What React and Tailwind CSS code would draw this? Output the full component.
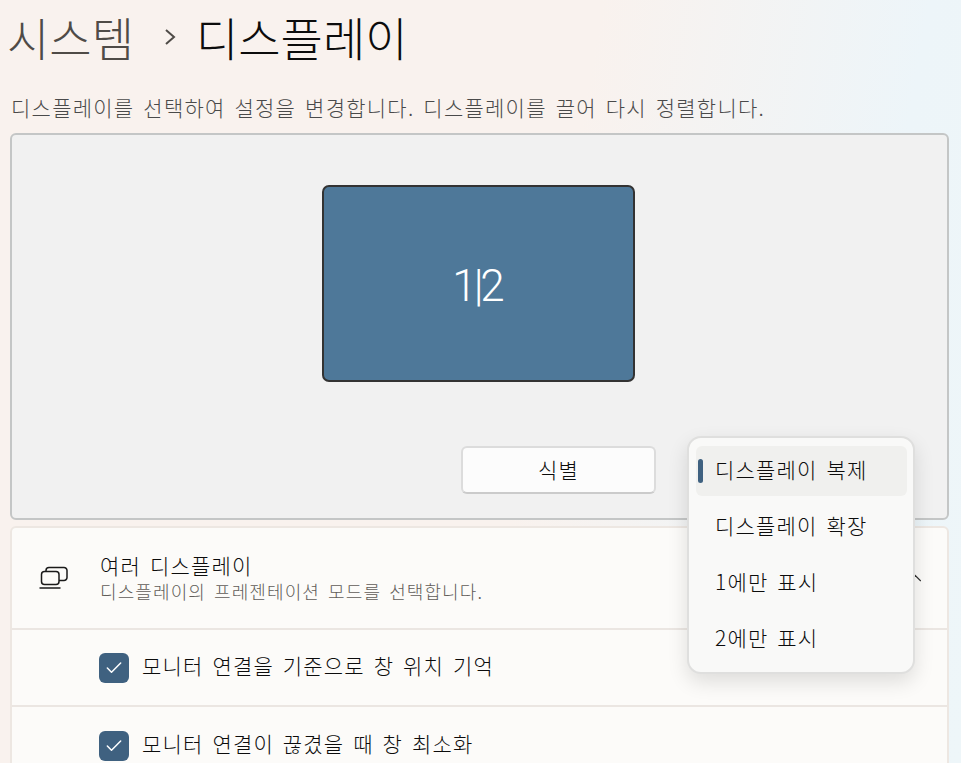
import { Check, ChevronUp } from "lucide-react";

const font = { fontFamily: '"Noto Sans CJK KR", "Noto Sans", sans-serif' };

function MonitorsIcon() {
  return (
    <svg width="30" height="24" viewBox="0 0 30 24" fill="none" stroke="#1a1a1a" strokeWidth="1.5">
      <path d="M7 5.5V4.5a3 3 0 0 1 3-3h15a3 3 0 0 1 3 3v7a3 3 0 0 1-3 3h-5" />
      <rect x="2.5" y="5.5" width="17.5" height="13" rx="3" />
      <path d="M0.5 22h21" />
    </svg>
  );
}

function CheckRow({ text, last }) {
  return (
    <div className={`flex items-center h-[77px] pl-[87px] gap-[13px] ${last ? "" : "border-b-2 border-[#ebe6e2]"}`}>
      <div className="w-[30px] h-[30px] rounded-[6px] bg-[#3f6180] flex items-center justify-center">
        <Check size={20} color="#ffffff" strokeWidth={1.8} />
      </div>
      <span className="-mt-[3px] text-[21px] font-light text-[#0c0c0c] tracking-[1.2px] [word-spacing:3px]">{text}</span>
    </div>
  );
}

function MenuItem({ text, active }) {
  return (
    <div className={`relative h-[50px] w-[211px] rounded-[6px] flex items-center pl-[19px] mb-[6px] ${active ? "bg-[#f0f0ee]" : ""}`}>
      {active && <div className="absolute left-[2px] top-[13px] w-[5px] h-[24px] rounded-full bg-[#3f6180]" />}
      <span className="-mt-[2px] text-[21px] font-light text-[#0c0c0c] tracking-[1.2px] [word-spacing:3px]">{text}</span>
    </div>
  );
}

export default function App() {
  return (
    <div
      className="relative w-[961px] h-[763px] overflow-hidden bg-[linear-gradient(100deg,#f9f2ee_0%,#f9f2ee_55%,#edf5f9_85%,#eef6f9_100%)]"
      style={font}
    >
      <div className="flex items-center h-[77px] pl-[8px] pb-[6px] text-[46px] leading-none font-light">
        <span className="text-[#4f4b47] -ml-[1px]">시스템</span>
        <svg width="12" height="18" viewBox="0 0 12 18" fill="none" stroke="#4f4b47" strokeWidth="2" className="ml-[30px] mr-[20px] mt-[2px]">
          <path d="M2 2l8 7-8 7" />
        </svg>
        <span className="text-[#0c0c0c]">디스플레이</span>
      </div>

      <p className="pl-[11px] h-[56px] pt-[15px] text-[21px] leading-[30px] font-light text-[#4a4a4a] tracking-[1.25px] [word-spacing:3px] whitespace-nowrap">
        디스플레이를 선택하여 설정을 변경합니다. 디스플레이를 끌어 다시 정렬합니다.
      </p>

      <div className="ml-[10px] mr-[12px] h-[387px] rounded-[6px] border-2 border-[#c4c6c6] bg-[#f1f1f1] flex flex-col">
        <div className="mt-[50px] ml-[310px] w-[313px] h-[197px] rounded-[7px] border-2 border-[#333333] bg-[#4e7899] flex items-center justify-center text-white text-[44px]">
          <span className="font-light tracking-[-3px] mt-[4px] -ml-[3px]" style={{ fontFamily: "Roboto, sans-serif" }}>1|2</span>
        </div>
        <button className="mt-[64px] ml-[449px] w-[195px] h-[48px] rounded-[6px] border-2 border-[#dcdcdc] border-b-[#cbcbcb] bg-[#fcfcfc] text-[21px] font-light tracking-[1.2px] text-[#0c0c0c]">
          식별
        </button>
      </div>

      <div className="ml-[10px] mr-[12px] mt-[6px] rounded-t-[6px] border-2 border-[#ede7e2] bg-[#fcfbf9]">
        <div className="flex items-center h-[102px] pl-[27px] border-b-2 border-[#ebe6e2]">
          <MonitorsIcon />
          <div className="ml-[31px] flex flex-col -mt-[5px]">
            <span className="text-[21px] leading-[30px] font-light text-[#0c0c0c] tracking-[1.2px] [word-spacing:3px]">여러 디스플레이</span>
            <span className="text-[18px] leading-[22px] font-light text-[#605c58] tracking-[1.1px] [word-spacing:3px]">디스플레이의 프레젠테이션 모드를 선택합니다.</span>
          </div>
          <ChevronUp size={22} color="#333333" strokeWidth={1.2} className="ml-auto mr-[21px]" />
        </div>
        <CheckRow text="모니터 연결을 기준으로 창 위치 기억" />
        <CheckRow text="모니터 연결이 끊겼을 때 창 최소화" last />
      </div>

      {/* 드롭다운 메뉴 */}
      <div className="absolute left-[687px] top-[436px] w-[228px] h-[238px] rounded-[14px] border-2 border-[#dfdfde] bg-[#f9f9f8] shadow-[0_8px_20px_rgba(0,0,0,0.12)] py-[8px] px-[7px]">
        <MenuItem text="디스플레이 복제" active />
        <MenuItem text="디스플레이 확장" />
        <MenuItem text="1에만 표시" />
        <MenuItem text="2에만 표시" />
      </div>
    </div>
  );
}
